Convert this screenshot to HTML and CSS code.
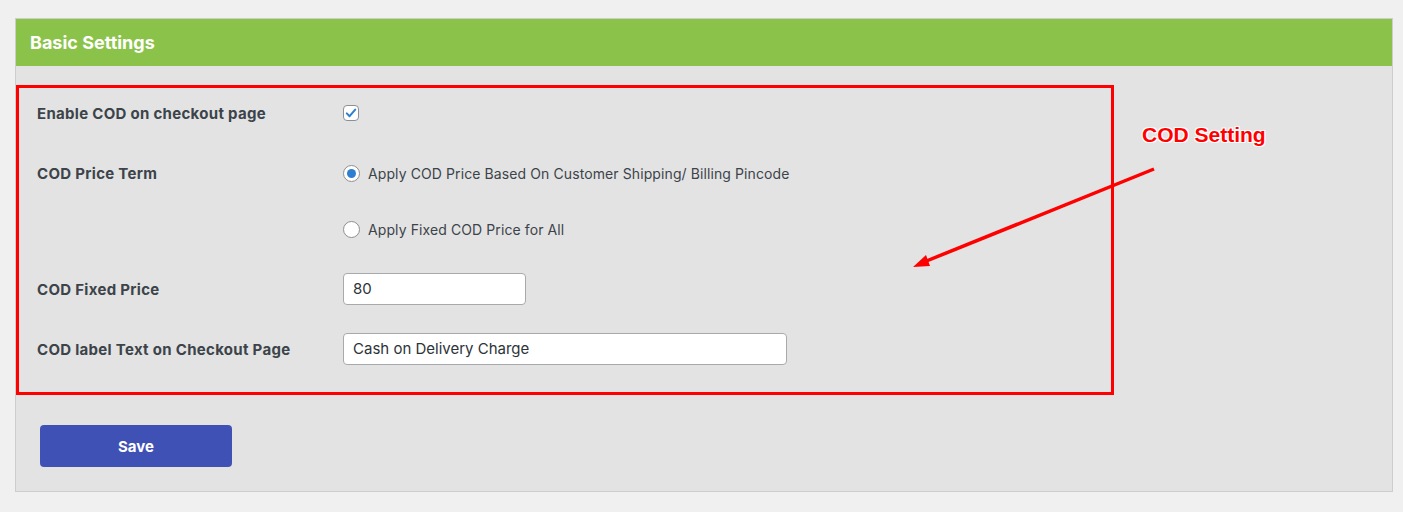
FILE: index.html
```html
<!DOCTYPE html>
<html lang="en">
<head>
<meta charset="utf-8">
<title>Basic Settings</title>
<link rel="stylesheet" href="styles.css">
</head>
<body>
<div class="card">
  <div class="card-header">Basic Settings</div>
  <div class="card-body">
    <div class="highlight">
      <div class="row row-1">
        <div class="label">Enable COD on checkout page</div>
        <div class="control"><span class="checkbox"><svg viewBox="0 0 16 16" width="16" height="16"><path d="M3.8 8.4 L6.6 11.2 L12.2 4.6" fill="none" stroke="#2f7fd1" stroke-width="2" stroke-linecap="round" stroke-linejoin="round"/></svg></span></div>
      </div>
      <div class="row row-2">
        <div class="label">COD Price Term</div>
        <div class="control"><span class="radio checked"></span><span class="opt">Apply COD Price Based On Customer Shipping/ Billing Pincode</span></div>
      </div>
      <div class="row row-3">
        <div class="label"></div>
        <div class="control"><span class="radio"></span><span class="opt">Apply Fixed COD Price for All</span></div>
      </div>
      <div class="row row-4">
        <div class="label">COD Fixed Price</div>
        <div class="control"><div class="input short">80</div></div>
      </div>
      <div class="row row-5">
        <div class="label">COD label Text on Checkout Page</div>
        <div class="control"><div class="input long">Cash on Delivery Charge</div></div>
      </div>
    </div>
    <button class="save">Save</button>
  </div>
</div>
<div class="annotation-text">COD Setting</div>
<svg class="annotation-arrow" width="1403" height="512" viewBox="0 0 1403 512">
  <line x1="1154" y1="169" x2="924" y2="262" stroke="#ff0000" stroke-width="3.5"/>
  <polygon points="913,267 926,255 930,266" fill="#ff0000"/>
</svg>
</body>
</html>
```
FILE: styles.css
```css
html, body {
  margin: 0;
  padding: 0;
}
body {
  background: #f0f0f0;
  font-family: Inter, "Liberation Sans", Arial, sans-serif;
  color: #3c434a;
  width: 1403px;
  height: 512px;
  position: relative;
  overflow: hidden;
}
.card {
  margin: 18px 0 0 15px;
  width: 1376px;
  border: 1px solid #cdcdcd;
  background: #e3e3e3;
}
.card-header {
  background: #8bc34a;
  color: #fff;
  font-weight: 700;
  font-size: 18px;
  height: 47px;
  line-height: 47px;
  padding-left: 14px;
}
.card-body {
  padding: 19px 0 24px 0;
}
.highlight {
  height: 304px;
  border: 3px solid #ff0000;
  padding: 0 0 0 18px;
  box-sizing: content-box;
  width: 1074px;
}
.row {
  display: flex;
  align-items: center;
  height: 40px;
}
.row-1 { margin-top: 6px; }
.row-2 { margin-top: 20px; }
.row-3 { margin-top: 16px; }
.row-4 { margin-top: 20px; }
.row-5 { margin-top: 20px; }
.label {
  width: 306px;
  flex: none;
  font-weight: 700;
  font-size: 15px;
  letter-spacing: 0.3px;
  color: #3c434a;
  position: relative;
  top: -1px;
}
.control {
  display: flex;
  align-items: center;
  position: relative;
  top: -1px;
}
.checkbox {
  width: 16px;
  height: 16px;
  box-sizing: border-box;
  border: 1px solid #8c8f94;
  border-radius: 4px;
  background: #fff;
  display: flex;
  align-items: center;
  justify-content: center;
}
.checkbox svg {
  display: block;
  margin: -1px;
}
.radio {
  width: 17px;
  height: 17px;
  box-sizing: border-box;
  border: 1px solid #8c8f94;
  border-radius: 50%;
  background: #fff;
  display: flex;
  align-items: center;
  justify-content: center;
}
.radio.checked::after {
  content: "";
  width: 9px;
  height: 9px;
  border-radius: 50%;
  background: #2f7fd1;
}
.opt {
  margin-left: 8px;
  font-size: 14px;
  letter-spacing: 0.1px;
  color: #3c434a;
}
.input {
  height: 32px;
  box-sizing: border-box;
  border: 1px solid #a7aaad;
  border-radius: 4px;
  background: #fff;
  font-size: 15px;
  color: #2c3338;
  padding: 0 9px;
  line-height: 30px;
}
.input.short { width: 183px; }
.input.long { width: 444px; }
.save {
  display: block;
  margin: 30px 0 0 24px;
  width: 192px;
  height: 42px;
  border: none;
  border-radius: 4px;
  background: #3f51b5;
  color: #fff;
  font-family: Inter, "Liberation Sans", Arial, sans-serif;
  font-weight: 700;
  font-size: 15px;
  cursor: pointer;
}
.annotation-text {
  position: absolute;
  left: 1142px;
  top: 123px;
  color: #ff0000;
  font-family: "Liberation Sans", Arial, sans-serif;
  font-weight: bold;
  font-size: 21px;
  text-shadow: 1px 1px 0 #fff, -1px -1px 0 #fff, 1px -1px 0 #fff, -1px 1px 0 #fff;
}
.annotation-arrow {
  position: absolute;
  left: 0;
  top: 0;
  pointer-events: none;
}
```
